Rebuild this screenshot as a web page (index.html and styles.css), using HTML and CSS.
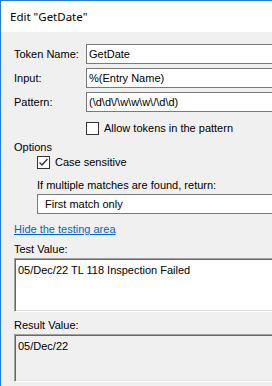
FILE: index.html
```html
<!DOCTYPE html>
<html lang="en">
<head>
    <meta charset="UTF-8">
    <meta name="viewport" content="width=device-width, initial-scale=1.0">
    <title>Edit "GetDate"</title>
    <link rel="stylesheet" href="styles.css">
</head>
<body>
    <div class="window">
        <div class="titlebar">Edit "GetDate"</div>
        <div class="content">
            <div class="field-row">
                <label for="tokenName">Token Name:</label>
                <input type="text" id="tokenName" class="edit" value="GetDate">
            </div>
            <div class="field-row">
                <label for="input">Input:</label>
                <input type="text" id="input" class="edit" value="%(Entry Name)">
            </div>
            <div class="field-row">
                <label for="pattern">Pattern:</label>
                <input type="text" id="pattern" class="edit" value="(\d\d\/\w\w\w\/\d\d)">
            </div>
            <div class="check-row allow-row">
                <span class="checkbox"></span>
                <span>Allow tokens in the pattern</span>
            </div>

            <div class="section-label">Options</div>
            <div class="options-group">
                <div class="check-row">
                    <span class="checkbox">
                        <svg width="11" height="11" viewBox="0 0 11 11"><path d="M1.5 5.5 L4 8 L9.5 2" fill="none" stroke="#333" stroke-width="1.3"/></svg>
                    </span>
                    <span>Case sensitive</span>
                </div>
                <div class="multi-label">If multiple matches are found, return:</div>
                <div class="combo">First match only</div>
            </div>

            <a href="#" class="link">Hide the testing area</a>

            <div class="section-label test-label">Test Value:</div>
            <div class="textbox test-box">05/Dec/22 TL 118 Inspection Failed</div>

            <div class="section-label test-label">Result Value:</div>
            <div class="textbox result-box">05/Dec/22</div>
        </div>
    </div>
</body>
</html>
```

FILE: styles.css
```css
html, body {
    margin: 0;
    overflow: hidden;
}
body {
    font-family: "Liberation Sans", Arial, sans-serif;
    font-size: 11px;
    color: #000;
    background: #f0f0f0;
}
.window {
    height: 386px;
    box-sizing: border-box;
    border-left: 1px solid #2b7bd3;
    border-top: 1px solid #2b7bd3;
    background: #f0f0f0;
}
.titlebar {
    height: 31px;
    line-height: 31px;
    padding-left: 9px;
    background: #fff;
    font-family: "Noto Sans", sans-serif;
    font-size: 11.5px;
}
.content {
    padding: 12px 0 0 13px;
}
.field-row {
    display: flex;
    align-items: center;
    height: 20px;
    margin-bottom: 4px;
}
.field-row label {
    width: 72px;
    flex-shrink: 0;
    line-height: 13px;
}
/* boxes run off the right edge of the crop, so no right border */
.edit {
    flex: 1;
    min-width: 0;
    height: 20px;
    box-sizing: border-box;
    border: 1px solid #7a7a7a;
    border-right: none;
    padding: 0 2px;
    margin: 0;
    font-family: "Liberation Sans", Arial, sans-serif;
    font-size: 11px;
    color: #000;
    background: #fff;
    outline: none;
}
.check-row {
    display: flex;
    align-items: center;
    gap: 5px;
    line-height: 13px;
}
.allow-row {
    margin: 10px 0 0 72px;
}
.checkbox {
    width: 13px;
    height: 13px;
    box-sizing: border-box;
    border: 1px solid #333;
    background: #fff;
    display: flex;
}
.section-label {
    line-height: 13px;
    margin-top: 6px;
}
.options-group {
    padding-left: 23px;
    margin-top: 2px;
}
.multi-label {
    line-height: 13px;
    margin-top: 10px;
}
.combo {
    height: 20px;
    box-sizing: border-box;
    border: 1px solid #7a7a7a;
    border-right: none;
    background: #fff;
    margin-top: 2px;
    padding-left: 7px;
    line-height: 18px;
}
.link {
    display: block;
    width: max-content;
    margin-top: 9px;
    line-height: 13px;
    color: #0066cc;
}
.test-label {
    margin-top: 7px;
}
.textbox {
    margin-top: 2px;
    box-sizing: border-box;
    border: 1px solid #a0a0a0;
    border-right: none;
    border-bottom-color: #fff;
    box-shadow: inset 1px 1px 0 #696969, inset 0 -1px 0 #e3e3e3;
    padding: 5px 3px;
    line-height: 13px;
}
.test-box {
    height: 54px;
    background: #fff;
}
.result-box {
    height: 48px;
    background: #f0f0f0;
}
```
